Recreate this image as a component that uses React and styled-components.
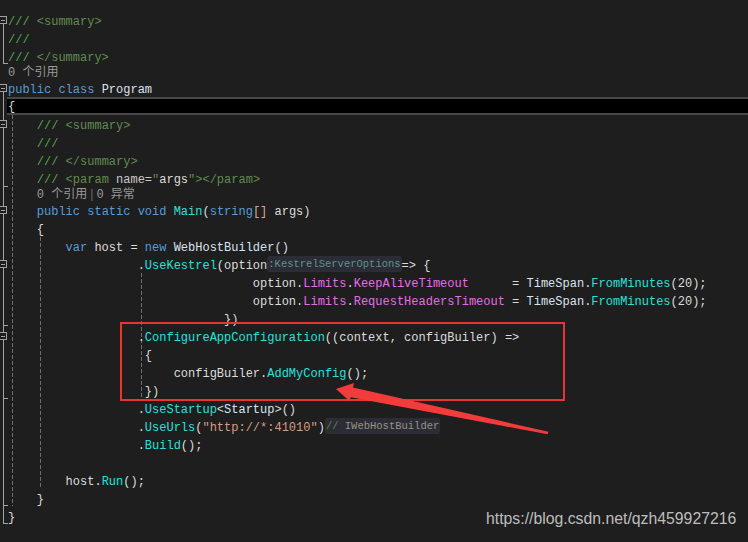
import styled, { createGlobalStyle } from 'styled-components';

const C = {
  text: '#dcdcdc',
  kw: '#569cd6',
  type: '#dae3ee',
  fn: '#28e0dc',
  prop: '#e46ee6',
  str: '#d69d85',
  com: '#57a64a',
  tag: '#608b4e',
  attr: '#c8c8c8',
  brk: '#d8aaa8',
};

const lines = [
  { i: 0, t: [['com', '///'], ['tag', ' <summary>']] },
  { i: 0, t: [['com', '///']] },
  { i: 0, t: [['com', '///'], ['tag', ' </summary>']] },
  { i: 0, lens: '0 个引用' },
  { i: 0, t: [['kw', 'public'], ['text', ' '], ['kw', 'class'], ['text', ' '], ['type', 'Program']] },
  { i: 0, current: true, t: [['text', '{']] },
  { i: 4, t: [['com', '///'], ['tag', ' <summary>']] },
  { i: 4, t: [['com', '///']] },
  { i: 4, t: [['com', '///'], ['tag', ' </summary>']] },
  {
    i: 4,
    t: [['com', '///'], ['tag', ' <param '], ['attr', 'name='], ['tag', '"'], ['text', 'args'], ['tag', '"'], ['tag', '></param>']],
  },
  { i: 4, lens: '0 个引用|0 异常' },
  {
    i: 4,
    t: [
      ['kw', 'public'], ['text', ' '], ['kw', 'static'], ['text', ' '], ['kw', 'void'], ['text', ' '],
      ['fn', 'Main'], ['text', '('], ['kw', 'string'], ['brk', '[]'], ['text', ' args)'],
    ],
  },
  { i: 4, t: [['text', '{']] },
  {
    i: 8,
    t: [['kw', 'var'], ['text', ' host = '], ['kw', 'new'], ['text', ' '], ['type', 'WebHostBuilder'], ['text', '()']],
  },
  {
    i: 18,
    t: [['text', '.'], ['fn', 'UseKestrel'], ['text', '(option'], ['hint', ':KestrelServerOptions'], ['text', '=> {']],
  },
  {
    i: 34,
    t: [
      ['text', 'option.'], ['prop', 'Limits'], ['text', '.'], ['prop', 'KeepAliveTimeout'], ['text', '      = '],
      ['type', 'TimeSpan'], ['text', '.'], ['fn', 'FromMinutes'], ['text', '(20);'],
    ],
  },
  {
    i: 34,
    t: [
      ['text', 'option.'], ['prop', 'Limits'], ['text', '.'], ['prop', 'RequestHeadersTimeout'], ['text', ' = '],
      ['type', 'TimeSpan'], ['text', '.'], ['fn', 'FromMinutes'], ['text', '(20);'],
    ],
  },
  { i: 30, t: [['text', '})']] },
  { i: 18, t: [['text', '.'], ['fn', 'ConfigureAppConfiguration'], ['text', '((context, configBuiler) =>']] },
  { i: 19, t: [['text', '{']] },
  { i: 23, t: [['text', 'configBuiler.'], ['fn', 'AddMyConfig'], ['text', '();']] },
  { i: 19, t: [['text', '})']] },
  { i: 18, t: [['text', '.'], ['fn', 'UseStartup'], ['text', '<'], ['type', 'Startup'], ['text', '>()']] },
  {
    i: 18,
    t: [['text', '.'], ['fn', 'UseUrls'], ['text', '('], ['str', '"http://*:41010"'], ['text', ')'], ['hintc', '// IWebHostBuilder']],
  },
  { i: 18, t: [['text', '.'], ['fn', 'Build'], ['text', '();']] },
  { i: 0, t: [] },
  { i: 8, t: [['text', 'host.'], ['fn', 'Run'], ['text', '();']] },
  { i: 4, t: [['text', '}']] },
  { i: 0, t: [['text', '}']] },
];

const boxes = [20, 88, 124, 210, 264, 336];
const ticks = [63.5, 186.5, 325.5, 398.5, 505.5, 523.5];
const guides = [
  { x: 12.5, y1: 115, y2: 506 },
  { x: 40.5, y1: 237, y2: 489 },
  { x: 141.5, y1: 273, y2: 400 },
];

// outlining margin + indent guides, drawn under the text
function Margin() {
  return (
    <Overlay width="748" height="542">
      <g stroke="#a2a2a2" strokeWidth="1" fill="none">
        <line x1="3.5" y1="23" x2="3.5" y2="64" />
        <line x1="3.5" y1="91" x2="3.5" y2="524" />
        {ticks.map((y) => (
          <line key={y} x1="3" y1={y} x2="8" y2={y} />
        ))}
        {boxes.map((y) => (
          <g key={y}>
            <rect x="-0.5" y={y - 3.5} width="7" height="7" fill="#1e1e1e" />
            <line x1="1" y1={y + 0.5} x2="5" y2={y + 0.5} />
          </g>
        ))}
      </g>
      <g stroke="#707070" strokeWidth="1" strokeDasharray="4 2">
        {guides.map((g) => (
          <line key={g.x} x1={g.x} y1={g.y1} x2={g.x} y2={g.y2} />
        ))}
      </g>
    </Overlay>
  );
}

function Arrow() {
  return (
    <Overlay width="748" height="542">
      <polygon
        fill="#f33b3b"
        points="336,389 354,383 353,387.5 548.4,431.8 547.6,434.2 350.8,397.2 349.5,401"
      />
    </Overlay>
  );
}

function Token({ kind, text }) {
  if (kind === 'hint') {
    return (
      <Hint>
        <HintPart $c="#8c8c8c">:</HintPart>
        <HintPart $c="#5d9488">{text.slice(1)}</HintPart>
      </Hint>
    );
  }
  if (kind === 'hintc') {
    return (
      <Hint>
        <HintPart $c="#4f8a44">//</HintPart>
        <HintPart $c="#9a9282">{text.slice(2)}</HintPart>
      </Hint>
    );
  }
  return <Tok $c={C[kind]}>{text}</Tok>;
}

export default function App() {
  return (
    <>
      <GlobalStyle />
      <Editor>
        <Margin />
        {lines.map((l, n) =>
          l.lens ? (
            <LensRow key={n}>
              <Gutter />
              <Lens>
                {' '.repeat(l.i)}
                {l.lens.split('|').map((p, k) => (
                  <LensPart key={k}>
                    {k > 0 && <Sep>|</Sep>}
                    {p}
                  </LensPart>
                ))}
              </Lens>
            </LensRow>
          ) : (
            <Row key={n}>
              <Gutter />
              <Code $current={l.current}>
                {' '.repeat(l.i)}
                {l.t.map(([k, s], j) => (
                  <Token key={j} kind={k} text={s} />
                ))}
              </Code>
            </Row>
          )
        )}
        <Callout />
        <Arrow />
        <Watermark>https://blog.csdn.net/qzh459927216</Watermark>
      </Editor>
    </>
  );
}

const GlobalStyle = createGlobalStyle`
  html, body {
    margin: 0;
    background: #1e1e1e;
  }
`;

const Editor = styled.div`
  position: relative;
  width: 748px;
  height: 542px;
  overflow: hidden;
  background: #1e1e1e;
  padding-top: 11px;
  box-sizing: border-box;
  display: flex;
  flex-direction: column;
  font-family: 'Liberation Mono', 'DejaVu Sans Mono', monospace;
  font-size: 12px;
  color: #dcdcdc;
`;

const Row = styled.div`
  position: relative;
  display: flex;
  height: 18px;
  flex: none;
`;

const LensRow = styled.div`
  position: relative;
  display: flex;
  height: 14px;
  flex: none;
`;

const Gutter = styled.div`
  width: 7px;
  flex: none;
`;

const Code = styled.div`
  flex: 1;
  box-sizing: border-box;
  padding-left: 1px;
  padding-top: ${(p) => (p.$current ? '0' : '2px')};
  line-height: ${(p) => (p.$current ? '16px' : '18px')};
  white-space: pre;
  background: ${(p) => (p.$current ? '#000' : 'transparent')};
  border-top: ${(p) => (p.$current ? '2px solid #474747' : 'none')};
  border-bottom: ${(p) => (p.$current ? '2px solid #474747' : 'none')};
`;

const Tok = styled.span`
  color: ${(p) => p.$c};
`;

const Hint = styled.span`
  display: inline-block;
  vertical-align: top;
  margin-top: -1px;
  height: 16px;
  line-height: 16px;
  padding: 0 1px;
  border-radius: 3px;
  background: #2c2c36;
  font-size: 10.5px;
`;

const HintPart = styled.span`
  color: ${(p) => p.$c};
`;

const Lens = styled.div`
  padding-left: 1px;
  padding-top: 1px;
  white-space: pre;
  line-height: 14px;
  font-size: 12px;
  color: #9a9a9a;
  font-family: 'Liberation Mono', 'Noto Sans CJK SC', monospace;
`;

const LensPart = styled.span`
  font-family: 'Liberation Mono', 'Noto Sans CJK SC', monospace;
  font-size: 12px;
`;

const Sep = styled.span`
  color: #6e6e6e;
  margin: 0 1px;
`;

const Overlay = styled.svg`
  position: absolute;
  left: 0;
  top: 0;
  pointer-events: none;
`;

const Callout = styled.div`
  position: absolute;
  left: 120px;
  top: 322px;
  width: 445px;
  height: 79px;
  box-sizing: border-box;
  border: 2px solid #ea3434;
`;

const Watermark = styled.div`
  position: absolute;
  left: 486px;
  top: 510px;
  font-family: 'Liberation Sans', Arial, sans-serif;
  font-size: 15.8px;
  color: #bdbdbd;
`;
